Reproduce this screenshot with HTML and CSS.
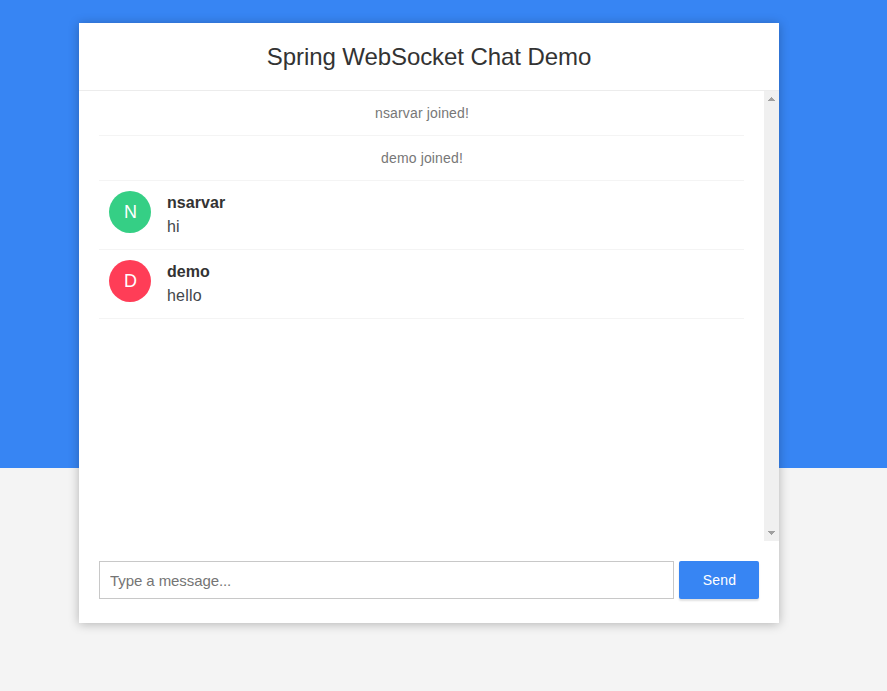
FILE: index.html
```html
<!DOCTYPE html>
<html lang="en">
<head>
<meta charset="utf-8">
<title>Spring WebSocket Chat Demo</title>
<link rel="stylesheet" href="styles.css">
</head>
<body>
<main class="chat">
  <header class="chat-header"><h2>Spring WebSocket Chat Demo</h2></header>
  <div class="message-pane">
    <ul class="messages">
      <li class="event">nsarvar joined!</li>
      <li class="event">demo joined!</li>
      <li class="message"><i class="avatar green">N</i><div><b>nsarvar</b><p>hi</p></div></li>
      <li class="message"><i class="avatar red">D</i><div><b>demo</b><p>hello</p></div></li>
    </ul>
    <div class="scrollbar">
      <svg width="15" height="15" viewBox="0 0 15 15"><path d="M7 6h1v1h1v1h1v1h1v1H4V9h1V8h1V7h1z"/></svg>
      <svg width="15" height="15" viewBox="0 0 15 15"><path d="M4 5h7v1h-1v1H9v1H8v1H7V8H6V7H5V6H4z"/></svg>
    </div>
  </div>
  <form class="composer">
    <input type="text" placeholder="Type a message...">
    <button type="button">Send</button>
  </form>
</main>
</body>
</html>
```
FILE: styles.css
```css
* { box-sizing: border-box; }
body {
  margin: 0;
  height: 691px;
  padding: 23px 108px 0 79px;
  overflow: hidden;
  font: 16px/24px "Liberation Sans", Arial, sans-serif;
  color: #333;
  background: linear-gradient(#3785f3 468px, #f4f4f4 468px);
}
.chat {
  display: flex;
  flex-direction: column;
  width: 700px;
  height: 600px;
  background: #fff;
  box-shadow: 0 1px 10px rgba(0, 0, 0, 0.27);
}
.chat-header {
  height: 68px;
  padding: 15px;
  text-align: center;
  border-bottom: 1px solid #ececec;
}
h2 {
  margin: 0;
  font-size: 24px;
  font-weight: 500;
  line-height: 38px;
  letter-spacing: -0.08px;
}
.message-pane { display: flex; height: 450px; }
.messages { flex: 1; margin: 0; padding: 0 20px; list-style: none; }
.messages li { border-bottom: 1px solid #f4f4f4; }
.event {
  height: 45px;
  padding: 10px 0 0 1px;
  text-align: center;
  font-size: 14px;
  letter-spacing: 0.14px;
  color: #777;
}
.message { display: flex; gap: 16px; height: 69px; padding: 10px; }
.avatar {
  width: 42px;
  height: 42px;
  padding-left: 1px;
  border-radius: 50%;
  text-align: center;
  font-size: 18px;
  font-style: normal;
  line-height: 42px;
  color: #fff;
}
.green { background: #35cf85; }
.red { background: #ff3d57; }
.message b { display: block; letter-spacing: 0.05px; }
.message p { margin: 0; letter-spacing: 0.22px; color: #43464b; }
.scrollbar {
  display: flex;
  flex-direction: column;
  justify-content: space-between;
  width: 15px;
  background: #f0f0f0;
}
.scrollbar svg { display: block; fill: #a0a0a0; }
.composer { display: flex; gap: 5px; padding: 20px; }
input {
  width: 575px;
  height: 38px;
  padding: 0 10px;
  border: 1px solid #c8c8c8;
  border-radius: 0;
  font: 15px "Liberation Sans", Arial, sans-serif;
  letter-spacing: -0.08px;
}
input::placeholder { color: #757575; }
button {
  width: 80px;
  height: 38px;
  padding: 0 0 0 1px;
  border: 0;
  border-radius: 2px;
  font: 14px "Liberation Sans", Arial, sans-serif;
  letter-spacing: 0.18px;
  color: #fff;
  background: #3785f3;
  box-shadow: 0 2px 2px rgba(0, 0, 0, 0.12);
}
```
